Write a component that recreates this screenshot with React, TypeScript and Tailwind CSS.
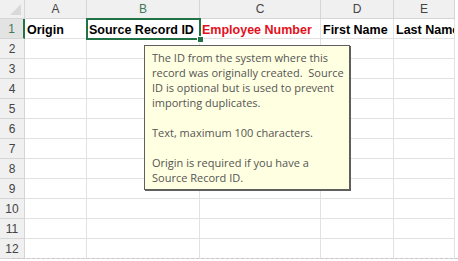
const cols = [
  { key: "A", w: "w-[62px]" },
  { key: "B", w: "w-[113px]" },
  { key: "C", w: "w-[121px]" },
  { key: "D", w: "w-[73px]" },
  { key: "E", w: "w-[61px]" },
];

const header: { text: string; red?: boolean }[] = [
  { text: "Origin" },
  { text: "Source Record ID" },
  { text: "Employee Number", red: true },
  { text: "First Name" },
  { text: "Last Name" },
];

const tip = [
  "The ID from the system where this",
  "record was originally created.  Source",
  "ID is optional but is used to prevent",
  "importing duplicates.",
  "",
  "Text, maximum 100 characters.",
  "",
  "Origin is required if you have a",
  "Source Record ID.",
];

const rows = Array.from({ length: 11 }, (_, i) => i + 2);

export default function App() {
  return (
    <div className="relative h-[261px] w-[458px] overflow-hidden bg-white font-['Liberation_Sans',sans-serif]">
      <div className="w-[455px]">
        {/* column letters */}
        <div className="flex h-[19px] bg-[#f0f0f0]">
          <div className="relative w-[25px] shrink-0 border-r border-b border-[#d5d5d5]">
            {/* select-all corner triangle */}
            <div className="absolute right-[3px] bottom-[3px] h-[11px] w-[11px] bg-[#d9d9d9] [clip-path:polygon(100%_0,100%_100%,0_100%)]" />
          </div>
          {cols.map((c) => (
            <div
              key={c.key}
              className={`${c.w} flex shrink-0 items-center justify-center border-r border-b border-[#d5d5d5] text-[12px] ${
                c.key === "B" ? "text-[#3f7a58]" : "text-[#444]"
              }`}
            >
              {c.key}
            </div>
          ))}
        </div>

        {/* row 1 */}
        <div className="flex h-[20px]">
          <div className="flex w-[25px] shrink-0 items-center justify-center border-r-2 border-b border-r-[#217346] border-b-[#d5d5d5] bg-[#e3e3e3] text-[12px] text-[#3f7a58]">
            1
          </div>
          {cols.map((c, i) => (
            <div
              key={c.key}
              className={`${c.w} shrink-0 overflow-hidden whitespace-nowrap border-r border-b border-[#e1e1e1] pl-[2px] pt-[2px] text-[12.5px] font-bold ${
                header[i].red ? "text-[#e3101c]" : "text-black"
              }`}
            >
              {header[i].text}
            </div>
          ))}
        </div>

        {rows.map((r) => (
          <div key={r} className="flex h-[20px]">
            <div className="flex w-[25px] shrink-0 items-center justify-center border-r border-b border-[#d5d5d5] bg-[#f0f0f0] text-[12px] text-[#444]">
              {r}
            </div>
            {cols.map((c) => (
              <div key={c.key} className={`${c.w} shrink-0 border-r border-b border-[#e1e1e1]`} />
            ))}
          </div>
        ))}
      </div>

      {/* page break line */}
      <div className="absolute left-[12px] right-0 top-[258px] border-t border-dashed border-[#c8c8c8]" />

      {/* selection */}
      <div className="absolute left-[86px] top-[18px] h-[22px] w-[115px] border-2 border-[#217346]" />
      <div className="absolute left-[197px] top-[36px] h-[7px] w-[7px] border border-white bg-[#217346]" />

      {/* comment tooltip */}
      <div className="absolute left-[144px] top-[45px] h-[145px] w-[206px] border border-[#5f5f5f] bg-[#ffffe1] px-[7px] pt-[4px] font-['Open_Sans',sans-serif] text-[11px] leading-[15px] text-[#555] shadow-[1px_1px_0_#5f5f5f]">
        {tip.map((line, i) => (
          <div key={i} className="h-[15px] whitespace-pre">
            {line}
          </div>
        ))}
      </div>
    </div>
  );
}
